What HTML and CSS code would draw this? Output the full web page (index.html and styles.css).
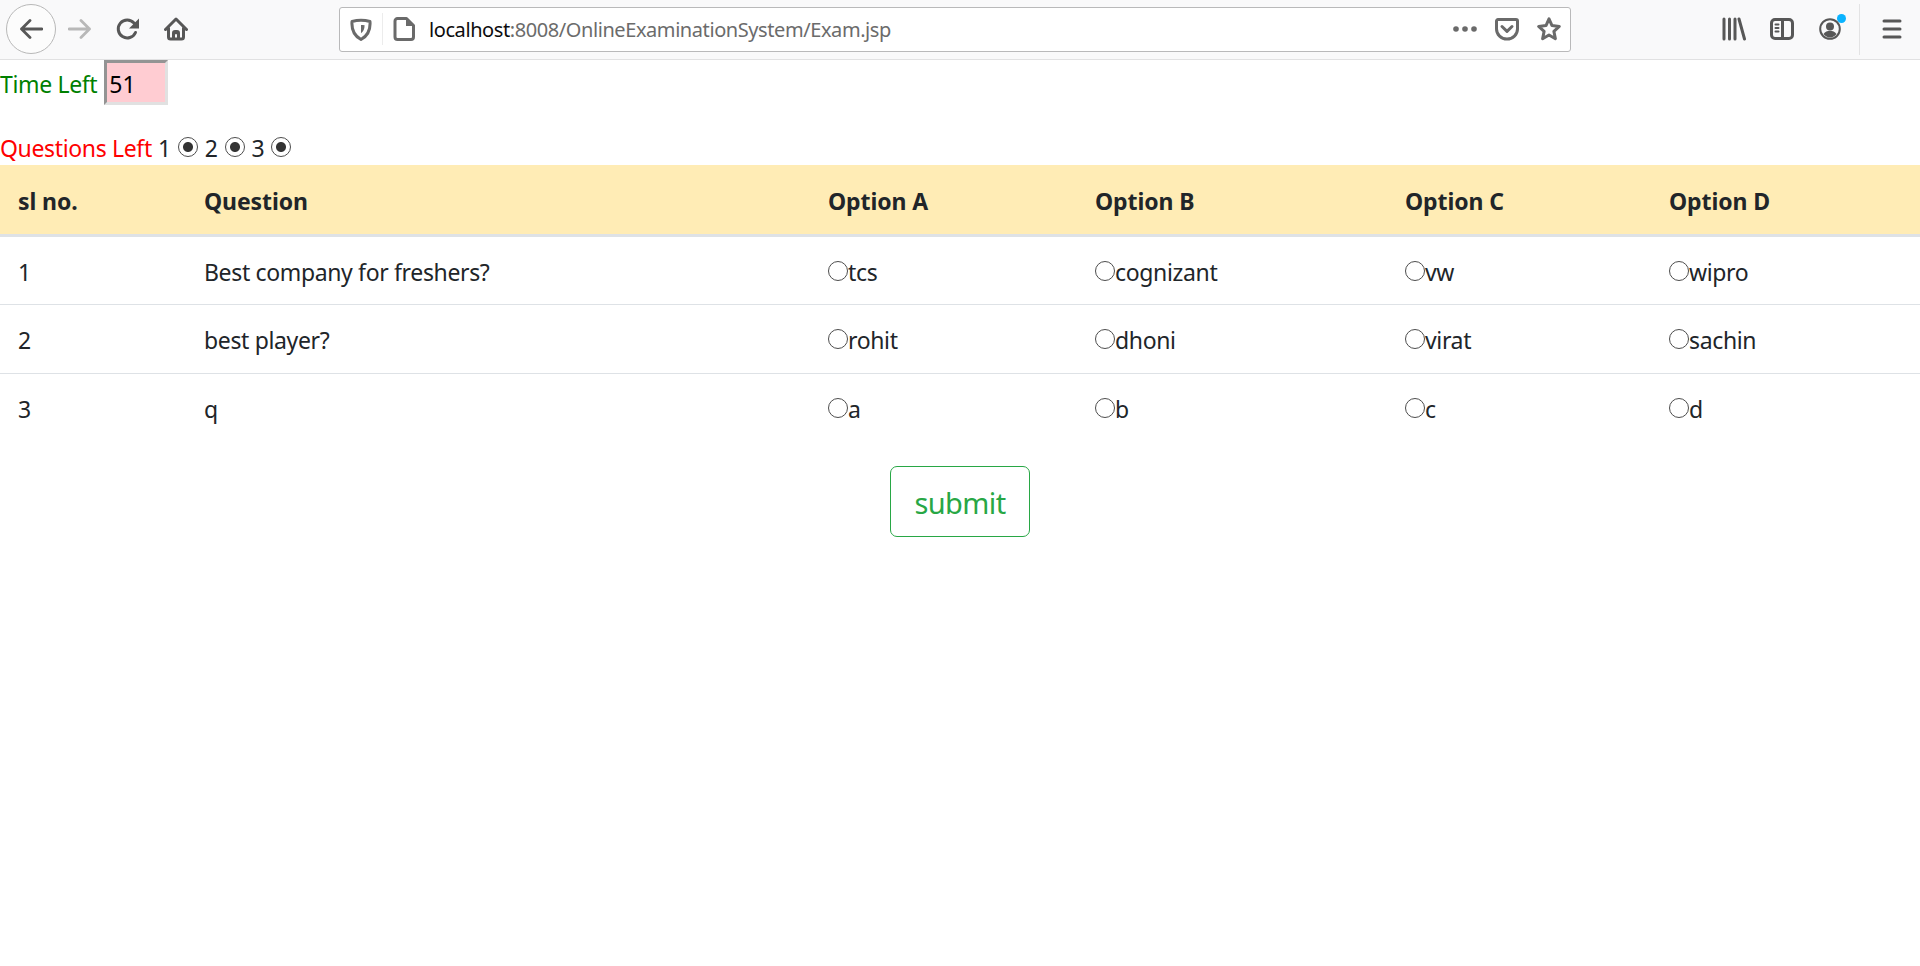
FILE: index.html
```html
<!DOCTYPE html>
<html lang="en">
  <head>
    <meta charset="UTF-8" />
    <title>Exam</title>
    <link rel="stylesheet" href="styles.css">
  </head>
  <body>
    <!-- Browser toolbar -->
    <div class="toolbar">
      <div class="nav-group">
        <div class="back-btn">
          <svg class="icon" viewBox="0 0 24 24"><path d="M23 12H2.500M11 3.500L2.500 12l8.500 8.500" class="stroke dark"/></svg>
        </div>
        <div class="slot"><svg class="icon" viewBox="0 0 24 24"><path d="M1 12h20.500M13 3.500l8.500 8.500-8.500 8.500" class="stroke faint"/></svg></div>
        <div class="slot"><svg class="icon" viewBox="0 0 24 24"><path d="M19.500 15.500A9 9 0 1 1 18 6l2.500 3" class="stroke dark heavy"/><path d="M23 1.500V11.500H13Z" class="fill-dark"/></svg></div>
        <div class="slot"><svg class="icon" viewBox="0 0 24 24"><path d="M1.500 12.500L12 2l10.500 10.500M4.500 11v9a2 2 0 0 0 2 2h11a2 2 0 0 0 2-2v-9" class="stroke dark heavy"/><path fill-rule="evenodd" d="M8 23v-7a3 3 0 0 1 3-3h2a3 3 0 0 1 3 3v7zM11 23h2v-5a1 1 0 0 0-2 0z" class="fill-dark"/></svg></div>
      </div>

      <div class="address-bar">
        <svg class="addr-icon" viewBox="0 0 24 24"><path d="M3 4.500c6-1.600 12-1.600 18 0 .6 8-1.500 14-9 18-7.500-4-9.600-10-9-18z" class="stroke mid heavy"/><path d="M12 8c1.200 0 2.300.1 3.600.3 0 3.500-1.200 6.200-3.600 8z" class="fill-mid"/></svg>
        <span class="addr-sep"></span>
        <svg class="addr-icon" viewBox="0 0 24 24"><path d="M3 4a2.500 2.500 0 0 1 2.500-2.500h9L21.500 8.500V20a2.500 2.500 0 0 1-2.500 2.500H5.500A2.500 2.500 0 0 1 3 20z" class="stroke mid heavy"/><path d="M14 1.500V9h7.500z" class="fill-mid"/></svg>
        <div class="url"><span class="url-host">localhost</span>:8008/OnlineExaminationSystem/Exam.jsp</div>
        <div class="addr-actions">
          <svg class="addr-icon" viewBox="0 0 24 24"><circle cx="3" cy="12" r="2.800" class="fill-mid"/><circle cx="12" cy="12" r="2.800" class="fill-mid"/><circle cx="21" cy="12" r="2.800" class="fill-mid"/></svg>
          <svg class="addr-icon" viewBox="0 0 24 24"><path d="M3 2.500h18a1.500 1.500 0 0 1 1.500 1.500v8a10.500 10 0 0 1-21 0V4A1.500 1.500 0 0 1 3 2.500z" class="stroke mid heavy"/><path d="M7 9.500l5 4.800 5-4.800" class="stroke mid heavy"/></svg>
          <svg class="addr-icon" viewBox="0 0 24 24"><path d="M12 1.800l3 6.800 7.300.8-5.400 5 1.500 7.300-6.400-3.700-6.400 3.700 1.500-7.300-5.400-5 7.300-.8z" class="stroke mid heavy"/></svg>
        </div>
      </div>

      <div class="tool-group">
        <div class="tool-slot"><svg class="icon" viewBox="0 0 24 24"><path d="M2 2v20M7.500 2v20M13 2v20M17 2l5.500 20" class="stroke dark heavy"/></svg></div>
        <div class="tool-slot"><svg class="icon" viewBox="0 0 24 24"><rect x="1.500" y="2.500" width="21" height="19" rx="3.500" class="stroke dark heavy"/><path d="M12.500 3v18" class="stroke dark heavy"/><path d="M5.500 7.500h3M5.500 11h3M5.500 14.500h3" class="stroke dark thin"/></svg></div>
        <div class="tool-slot account">
          <svg class="icon" viewBox="0 0 24 24"><circle cx="12" cy="12" r="9.800" class="stroke dark thin"/><circle cx="12" cy="9.500" r="4" class="fill-dark"/><path d="M5.500 17c1.700-2.700 3.800-3.300 6.500-3.300s4.800.6 6.500 3.300c-1.700 2.300-3.800 3.500-6.500 3.500s-4.800-1.200-6.500-3.500z" class="fill-dark"/></svg>
          <span class="badge"></span>
        </div>
        <span class="tool-sep"></span>
        <div class="menu-slot"><svg class="icon" viewBox="0 0 24 24"><path d="M4 4h16M4 12h16M4 20h16" class="stroke dark heavy"/></svg></div>
      </div>
    </div>

    <!-- Page -->
    <div class="time-row">
      <span class="time-label">Time Left</span>
      <input class="time-box" type="text" value="51" readonly>
    </div>

    <div class="questions-row">
      <span class="questions-label">Questions Left</span>
      <span>1</span><input class="radio" type="radio" checked>
      <span>2</span><input class="radio" type="radio" checked>
      <span>3</span><input class="radio" type="radio" checked>
    </div>

    <table class="exam-table">
      <thead>
        <tr>
          <th class="col-no">sl no.</th>
          <th class="col-question">Question</th>
          <th class="col-a">Option A</th>
          <th class="col-b">Option B</th>
          <th class="col-c">Option C</th>
          <th>Option D</th>
        </tr>
      </thead>
      <tbody>
        <tr>
          <td>1</td>
          <td>Best company for freshers?</td>
          <td><input class="radio" type="radio" name="q1">tcs</td>
          <td><input class="radio" type="radio" name="q1">cognizant</td>
          <td><input class="radio" type="radio" name="q1">vw</td>
          <td><input class="radio" type="radio" name="q1">wipro</td>
        </tr>
        <tr>
          <td>2</td>
          <td>best player?</td>
          <td><input class="radio" type="radio" name="q2">rohit</td>
          <td><input class="radio" type="radio" name="q2">dhoni</td>
          <td><input class="radio" type="radio" name="q2">virat</td>
          <td><input class="radio" type="radio" name="q2">sachin</td>
        </tr>
        <tr>
          <td>3</td>
          <td>q</td>
          <td><input class="radio" type="radio" name="q3">a</td>
          <td><input class="radio" type="radio" name="q3">b</td>
          <td><input class="radio" type="radio" name="q3">c</td>
          <td><input class="radio" type="radio" name="q3">d</td>
        </tr>
      </tbody>
    </table>

    <div class="submit-row">
      <button class="submit-btn" type="button">submit</button>
    </div>
  </body>
</html>
```

FILE: styles.css
```css
body {
  margin: 0;
  background: #fff;
  color: #212529;
  font-family: "Noto Sans", "Open Sans", sans-serif;
  font-size: 23px;
  letter-spacing: -0.350px;
  overflow: hidden;
}

/* Toolbar */
.toolbar {
  height: 60px;
  padding-bottom: 1px;
  box-sizing: border-box;
  display: flex;
  align-items: center;
  background: #f9f9fa;
  border-bottom: 1px solid #e1e1e2;
}

.nav-group {
  display: flex;
  align-items: center;
  margin-left: 6px;
}

.back-btn {
  width: 48px;
  height: 48px;
  margin-bottom: 1px;
  border: 1px solid #b8b8b8;
  border-radius: 50%;
  background: #fcfcfc;
  display: flex;
  align-items: center;
  justify-content: center;
}

.slot {
  width: 48px;
  display: flex;
  justify-content: center;
}

.icon {
  width: 24px;
  height: 24px;
}

.stroke {
  fill: none;
  stroke-width: 2.800;
  stroke-linecap: round;
  stroke-linejoin: round;
}

.heavy { stroke-width: 3; }
.thin { stroke-width: 2; }
.dark { stroke: #575757; }
.mid { stroke: #6a6a6a; }
.faint { stroke: #b8b8b8; }
.fill-dark { fill: #575757; }
.fill-mid { fill: #6a6a6a; }

.address-bar {
  width: 1232px;
  height: 45px;
  margin-left: 139px;
  padding: 0 9px 0 9px;
  box-sizing: border-box;
  display: flex;
  align-items: center;
  background: #fff;
  border: 1px solid #b9b9ba;
  border-radius: 3px;
}

.addr-icon {
  width: 24px;
  height: 24px;
  flex: none;
}

.addr-sep {
  width: 1px;
  height: 32px;
  margin: 0 9px;
  background: #ececec;
}

.url {
  margin-left: 13px;
  padding-top: 1px;
  color: #6b6b6b;
  font-size: 20px;
  letter-spacing: -0.420px;
}

.url-host {
  color: #0c0c0d;
}

.addr-actions {
  margin-left: auto;
  display: flex;
  align-items: center;
  gap: 18px;
}

.tool-group {
  display: flex;
  align-items: center;
  margin-left: 139px;
}

.tool-slot {
  position: relative;
  width: 48px;
  display: flex;
  justify-content: center;
}

.badge {
  position: absolute;
  top: -3px;
  right: 8px;
  width: 9px;
  height: 9px;
  border-radius: 50%;
  background: #0ab3ff;
}

.tool-sep {
  width: 1px;
  height: 51px;
  margin-left: 5px;
  background: #e3e3e4;
}

.menu-slot {
  width: 60px;
  padding-left: 4px;
  box-sizing: border-box;
  display: flex;
  justify-content: center;
}

/* Timer */
.time-row {
  height: 45px;
  display: flex;
  align-items: center;
  padding-top: 2px;
  box-sizing: border-box;
}

.time-label {
  color: #008000;
  margin-right: 7px;
}

.time-box {
  width: 64px;
  height: 45px;
  margin-top: -2px;
  padding: 2px 2px 0;
  box-sizing: border-box;
  border: 3px solid;
  border-color: #949494 #e1e1e1 #e1e1e1 #949494;
  background: #ffccd2;
  color: #000;
  font: inherit;
  outline: none;
}

/* Questions left */
.questions-row {
  height: 35px;
  margin-top: 25px;
  display: flex;
  align-items: center;
  gap: 7px;
}

.questions-label {
  color: #f00;
  margin-right: -1px;
}

.questions-row .radio {
  margin-bottom: 2px;
}

.radio {
  appearance: none;
  width: 20px;
  height: 20px;
  margin: 0;
  border: 1.500px solid #4d4d4d;
  border-radius: 50%;
  background: #fff;
  vertical-align: 0;
}

.radio:checked {
  background: radial-gradient(circle, #333 0 4.500px, #fff 5.500px);
}

/* Table */
.exam-table {
  width: 100%;
  border-collapse: collapse;
  table-layout: fixed;
}

.exam-table th,
.exam-table td {
  padding: 2px 18px 0;
  text-align: left;
}

.exam-table th {
  height: 67px;
  background: #ffecb5;
  border-bottom: 3px solid #dee2e6;
  font-weight: 700;
  letter-spacing: -0.100px;
}

.exam-table td {
  height: 66px;
  border-bottom: 1px solid #dee2e6;
}

.exam-table tbody tr:first-child td {
  height: 65px;
}

.exam-table tbody tr:last-child td {
  border-bottom: 0;
}

.col-no { width: 150px; }
.col-question { width: 588px; }
.col-a { width: 231px; }
.col-b { width: 274px; }
.col-c { width: 228px; }

/* Submit */
.submit-row {
  margin-top: 24px;
  display: flex;
  justify-content: center;
}

.submit-btn {
  width: 140px;
  height: 71px;
  padding-top: 3px;
  background: #fff;
  border: 1px solid #28a745;
  border-radius: 7px;
  color: #28a745;
  font: inherit;
  font-size: 29px;
  letter-spacing: -0.600px;
}
```
